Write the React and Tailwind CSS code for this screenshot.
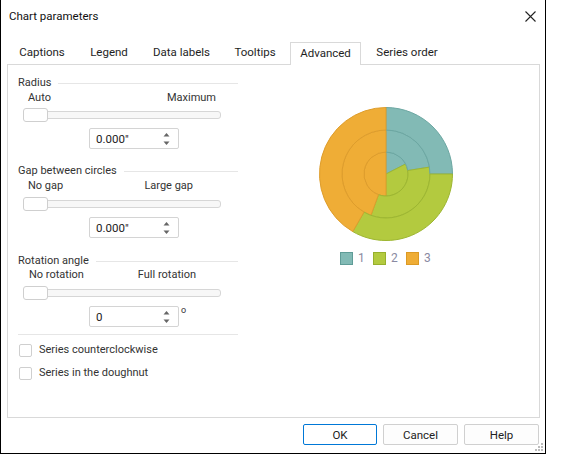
import React from "react";

const CX = 70, CY = 70;
function pt(r, a) {
  const rad = ((a - 90) * Math.PI) / 180;
  return [CX + r * Math.cos(rad), CY + r * Math.sin(rad)];
}
function sector(r0, r1, a0, a1) {
  const large = a1 - a0 > 180 ? 1 : 0;
  const [x1, y1] = pt(r1, a0);
  const [x2, y2] = pt(r1, a1);
  if (r0 === 0) {
    return `M${CX} ${CY} L${x1} ${y1} A${r1} ${r1} 0 ${large} 1 ${x2} ${y2} Z`;
  }
  const [x3, y3] = pt(r0, a1);
  const [x4, y4] = pt(r0, a0);
  return `M${x1} ${y1} A${r1} ${r1} 0 ${large} 1 ${x2} ${y2} L${x3} ${y3} A${r0} ${r0} 0 ${large} 0 ${x4} ${y4} Z`;
}

const C1 = { fill: "#82bab5", stroke: "#6ca7a2" };
const C2 = { fill: "#b3ca3f", stroke: "#9db632" };
const C3 = { fill: "#efad36", stroke: "#de9d2c" };

const rings = [
  { r0: 0, r1: 22, b: [0, 63, 180, 360] },
  { r0: 22, r1: 44, b: [0, 81, 200, 360] },
  { r0: 44, r1: 66.5, b: [0, 90, 210, 360] },
];

function Pie() {
  const cols = [C1, C2, C3];
  return (
    <svg width="140" height="140" viewBox="0 0 140 140">
      {rings.map((ring, ri) =>
        cols.map((c, i) => (
          <path
            key={ri + "-" + i}
            d={sector(ring.r0, ring.r1, ring.b[i], ring.b[i + 1])}
            fill={c.fill}
            stroke={c.stroke}
            strokeWidth="1"
            strokeLinejoin="round"
          />
        ))
      )}
    </svg>
  );
}

function GroupHeader({ children, className = "" }) {
  return (
    <div className={"flex items-center h-[14px] " + className}>
      <span className="text-[#333]">{children}</span>
      <div className="flex-1 ml-[7px] h-px bg-[#e6e6e6]" />
    </div>
  );
}

function Slider({ className = "" }) {
  return (
    <div className={"relative ml-[5px] w-[198px] h-[14px] " + className}>
      <div className="absolute left-0 right-0 top-[3px] h-[8px] rounded-[3px] border border-[#d6d6d6] bg-[#f7f7f7]" />
      <div className="absolute left-0 top-0 w-[25px] h-[14px] rounded-[3px] border border-[#cfcfcf] bg-white" />
    </div>
  );
}

function SpinArrows() {
  return (
    <svg width="7" height="16" viewBox="0 0 7 16">
      <path d="M3.5 2 L6.5 5.5 L0.5 5.5 Z" fill="#666" />
      <path d="M3.5 14 L6.5 10.5 L0.5 10.5 Z" fill="#666" />
    </svg>
  );
}

function Spin({ value, className = "" }) {
  return (
    <div
      className={
        "ml-[71px] w-[90px] h-[21px] rounded-[2px] border border-[#d4d4d4] bg-white flex items-center pl-[6px] pr-[8px] justify-between " +
        className
      }
    >
      <span className="text-[#222] text-[11.5px]">{value}</span>
      <SpinArrows />
    </div>
  );
}

function Check({ label, className = "" }) {
  return (
    <div className={"flex items-center h-[16px] " + className}>
      <div className="ml-[1px] w-[13px] h-[13px] rounded-[2px] border border-[#cfcfcf] bg-white" />
      <span className="ml-[7px] text-[#333]">{label}</span>
    </div>
  );
}

function Legend() {
  const items = [
    ["1", "bg-[#82bab5] border-[#5f9c97]"],
    ["2", "bg-[#b3ca3f] border-[#97b02c]"],
    ["3", "bg-[#efad36] border-[#dc9a25]"],
  ];
  return (
    <div className="flex ml-[102px] mt-[8px] h-[13px]">
      {items.map(([t, cls]) => (
        <div key={t} className="w-[33px] flex items-center">
          <div className={"w-[13px] h-[13px] border " + cls} />
          <span className="ml-[5px] text-[12px] leading-[13px] text-[#8a8aa2]">{t}</span>
        </div>
      ))}
    </div>
  );
}

export default function App() {
  const tabs = [
    ["Captions", "w-[66px]"],
    ["Legend", "w-[58px]"],
    ["Data labels", "w-[77px]"],
    ["Tooltips", "w-[60px]"],
    ["Advanced", "w-[71px]"],
    ["Series order", "w-[82px]"],
  ];
  return (
    <div className="w-[561px] h-[455px] bg-white flex font-['Roboto',sans-serif] text-[11px] leading-[14px] text-[#1e1e1e]">
      <div className="relative w-[546px] h-[454px] border-l border-r border-b border-black bg-white flex flex-col">
        {/* Title bar */}
        <div className="h-[32px] flex items-center justify-between pl-[8px] pr-[9px]">
          <span className="text-[11.5px] text-[#111]">Chart parameters</span>
          <svg width="11" height="11" viewBox="0 0 11 11">
            <path d="M0.5 0.5 L10.5 10.5 M10.5 0.5 L0.5 10.5" stroke="#222" strokeWidth="1.1" />
          </svg>
        </div>

        {/* Tabs */}
        <div className="mt-[10px] h-[23px] -mb-px flex pl-[8px] gap-[5px] relative z-10">
          {tabs.map(([t, w]) => (
            <div
              key={t}
              className={
                "h-[23px] flex items-center justify-center pb-[3px] text-[11.5px] " +
                w +
                (t === "Advanced" ? " bg-white border border-b-0 border-[#d9d9d9]" : "")
              }
            >
              {t}
            </div>
          ))}
        </div>

        {/* Panel */}
        <div className="ml-[6px] w-[533px] h-[354px] border border-[#d9d9d9] flex">
          <div className="w-[230px] pl-[10px] flex flex-col">
            <GroupHeader className="mt-[11px]">Radius</GroupHeader>
            <div className="mt-[1px] h-[14px] flex justify-between pl-[10px] pr-[22px] text-[#333]">
              <span>Auto</span>
              <span>Maximum</span>
            </div>
            <Slider className="mt-[3px]" />
            <Spin value={'0.000"'} className="mt-[6px]" />

            <GroupHeader className="mt-[15px]">Gap between circles</GroupHeader>
            <div className="mt-[1px] h-[14px] flex justify-between pl-[10px] pr-[45px] text-[#333]">
              <span>No gap</span>
              <span>Large gap</span>
            </div>
            <Slider className="mt-[4px]" />
            <Spin value={'0.000"'} className="mt-[6px]" />

            <GroupHeader className="mt-[16px]">Rotation angle</GroupHeader>
            <div className="mt-0 h-[14px] flex justify-between pl-[11px] pr-[42px] text-[#333]">
              <span>No rotation</span>
              <span>Full rotation</span>
            </div>
            <Slider className="mt-[4px]" />
            <div className="mt-[6px] flex items-start">
              <Spin value="0" />
              <span className="ml-[2px] -mt-[1px] text-[9px] leading-[10px] text-[#333]">o</span>
            </div>

            <div className="mt-[7px] h-px bg-[#e6e6e6]" />
            <Check label="Series counterclockwise" className="mt-[7px]" />
            <Check label="Series in the doughnut" className="mt-[7px]" />
          </div>

          <div className="flex-1 flex flex-col">
            <div className="ml-[78px] mt-[39px] w-[140px] h-[140px]">
              <Pie />
            </div>
            <Legend />
          </div>
        </div>

        {/* Buttons */}
        <div className="mt-[6px] flex justify-end pr-[6px] gap-[6px]">
          <button className="w-[74px] h-[21px] rounded-[2px] border border-[#0078d7] bg-white text-[11.5px] text-[#222]">
            OK
          </button>
          <button className="w-[75px] h-[21px] rounded-[2px] border border-[#d0d0d0] bg-[#fdfdfd] text-[11.5px] text-[#222]">
            Cancel
          </button>
          <button className="w-[75px] h-[21px] rounded-[2px] border border-[#d0d0d0] bg-[#fdfdfd] text-[11.5px] text-[#222]">
            Help
          </button>
        </div>

        {/* Size grip */}
        <svg className="absolute right-[1px] bottom-[1px]" width="10" height="10" viewBox="0 0 10 10">
          {[
            [7, 1],
            [4, 4],
            [7, 4],
            [1, 7],
            [4, 7],
            [7, 7],
          ].map(([x, y]) => (
            <rect key={x + "-" + y} x={x} y={y} width="2" height="2" fill="#bcbcbc" />
          ))}
        </svg>
      </div>
    </div>
  );
}
